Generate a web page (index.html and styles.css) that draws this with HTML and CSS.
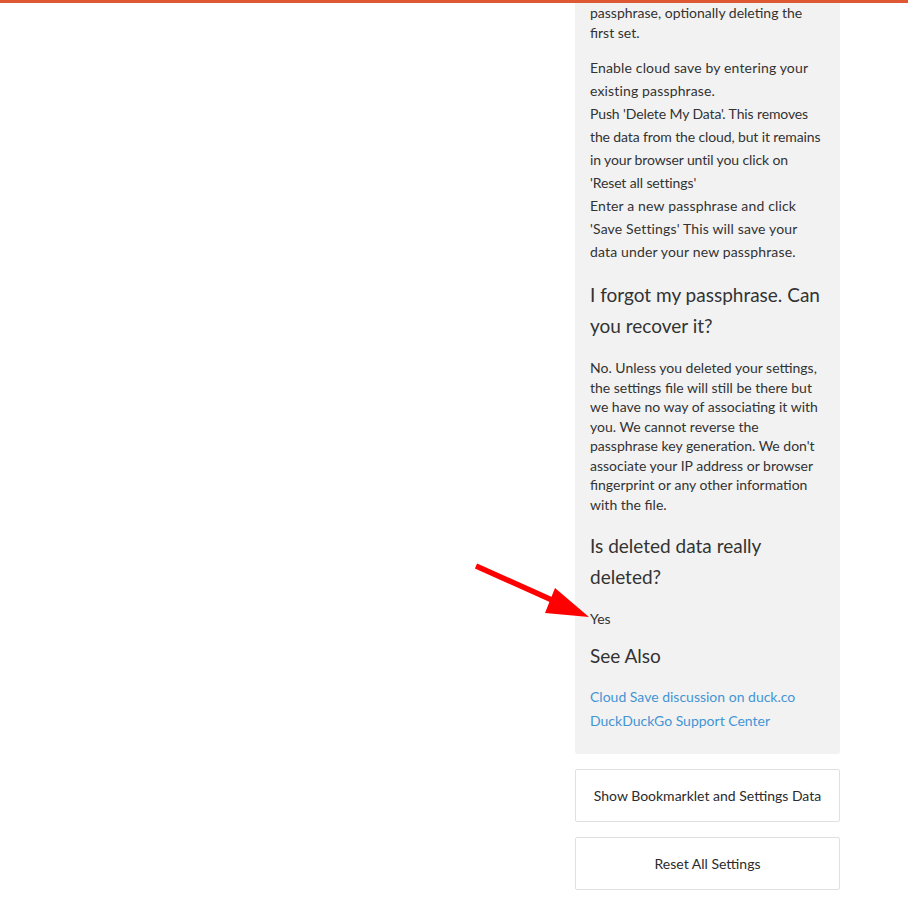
FILE: index.html
```html
<!DOCTYPE html>
<html lang="en">
<head>
<meta charset="utf-8">
<title>Cloud Save</title>
<link rel="stylesheet" href="styles.css">
</head>
<body>
<div class="topbar"></div>
<div class="layout">
  <main class="main"></main>
  <aside class="sidebar">
    <section class="panel">
      <p class="para">passphrase, optionally deleting the first set.</p>
      <ol class="steps">
        <li>Enable cloud save by entering your existing passphrase.</li>
        <li>Push 'Delete My Data'. This removes the data from the cloud, but it remains in your browser until you click on 'Reset all settings'</li>
        <li>Enter a new passphrase and click 'Save Settings' This will save your data under your new passphrase.</li>
      </ol>
      <h3 class="question">I forgot my passphrase. Can you recover it?</h3>
      <p class="para">No. Unless you deleted your settings, the settings file will still be there but we have no way of associating it with you. We cannot reverse the passphrase key generation. We don't associate your IP address or browser fingerprint or any other information with the file.</p>
      <h3 class="question">Is deleted data really deleted?</h3>
      <p class="para">Yes</p>
      <h3 class="question see-also">See Also</h3>
      <ul class="links">
        <li><a href="#">Cloud Save discussion on duck.co</a></li>
        <li><a href="#">DuckDuckGo Support Center</a></li>
      </ul>
    </section>
    <button class="btn" type="button">Show Bookmarklet and Settings Data</button>
    <button class="btn" type="button">Reset All Settings</button>
  </aside>
</div>
<svg class="arrow" width="130" height="70" viewBox="0 0 130 70" aria-hidden="true">
  <line x1="5" y1="11" x2="92" y2="50" stroke="#ff0000" stroke-width="5.5"/>
  <polygon points="118,62 84,33 74,58" fill="#ff0000"/>
</svg>
</body>
</html>
```

FILE: styles.css
```css
html, body {
  margin: 0;
  padding: 0;
  background: #ffffff;
}

body {
  font-family: Lato, "Open Sans", "Liberation Sans", sans-serif;
  color: #333333;
  font-size: 14px;
  position: relative;
  min-height: 906px;
}

.topbar {
  height: 3px;
  background: #de5833;
}

.layout {
  display: flex;
  justify-content: flex-end;
  padding-right: 68px;
}

.main {
  flex: 1;
}

.sidebar {
  width: 265px;
  display: flex;
  flex-direction: column;
  gap: 15px;
}

.panel {
  background: #f2f2f2;
  border-radius: 0 0 3px 3px;
  padding: 0 15px 21px;
}

.para {
  margin: 0;
  line-height: 19.5px;
}

.steps {
  list-style: none;
  margin: 14px 0 0;
  padding: 0;
  line-height: 23px;
  letter-spacing: 0.15px;
}

.steps li:nth-child(2) {
  letter-spacing: -0.12px;
}

.question {
  font-size: 19px;
  font-weight: 400;
  line-height: 31px;
  margin: 16px 0 17px;
}

.see-also {
  margin: 11px 0 14px;
}

.links {
  list-style: none;
  margin: 0;
  padding: 0;
  line-height: 24px;
}

.links a {
  color: #4495d4;
  text-decoration: none;
}

.btn {
  display: block;
  width: 100%;
  height: 53px;
  margin: 0;
  padding: 0 10px;
  background: #ffffff;
  border: 1px solid #e0e0e0;
  border-radius: 2px;
  font-family: inherit;
  font-size: 14px;
  color: #2b2b2b;
  text-align: center;
}

.arrow {
  position: absolute;
  left: 471px;
  top: 555px;
}
```
